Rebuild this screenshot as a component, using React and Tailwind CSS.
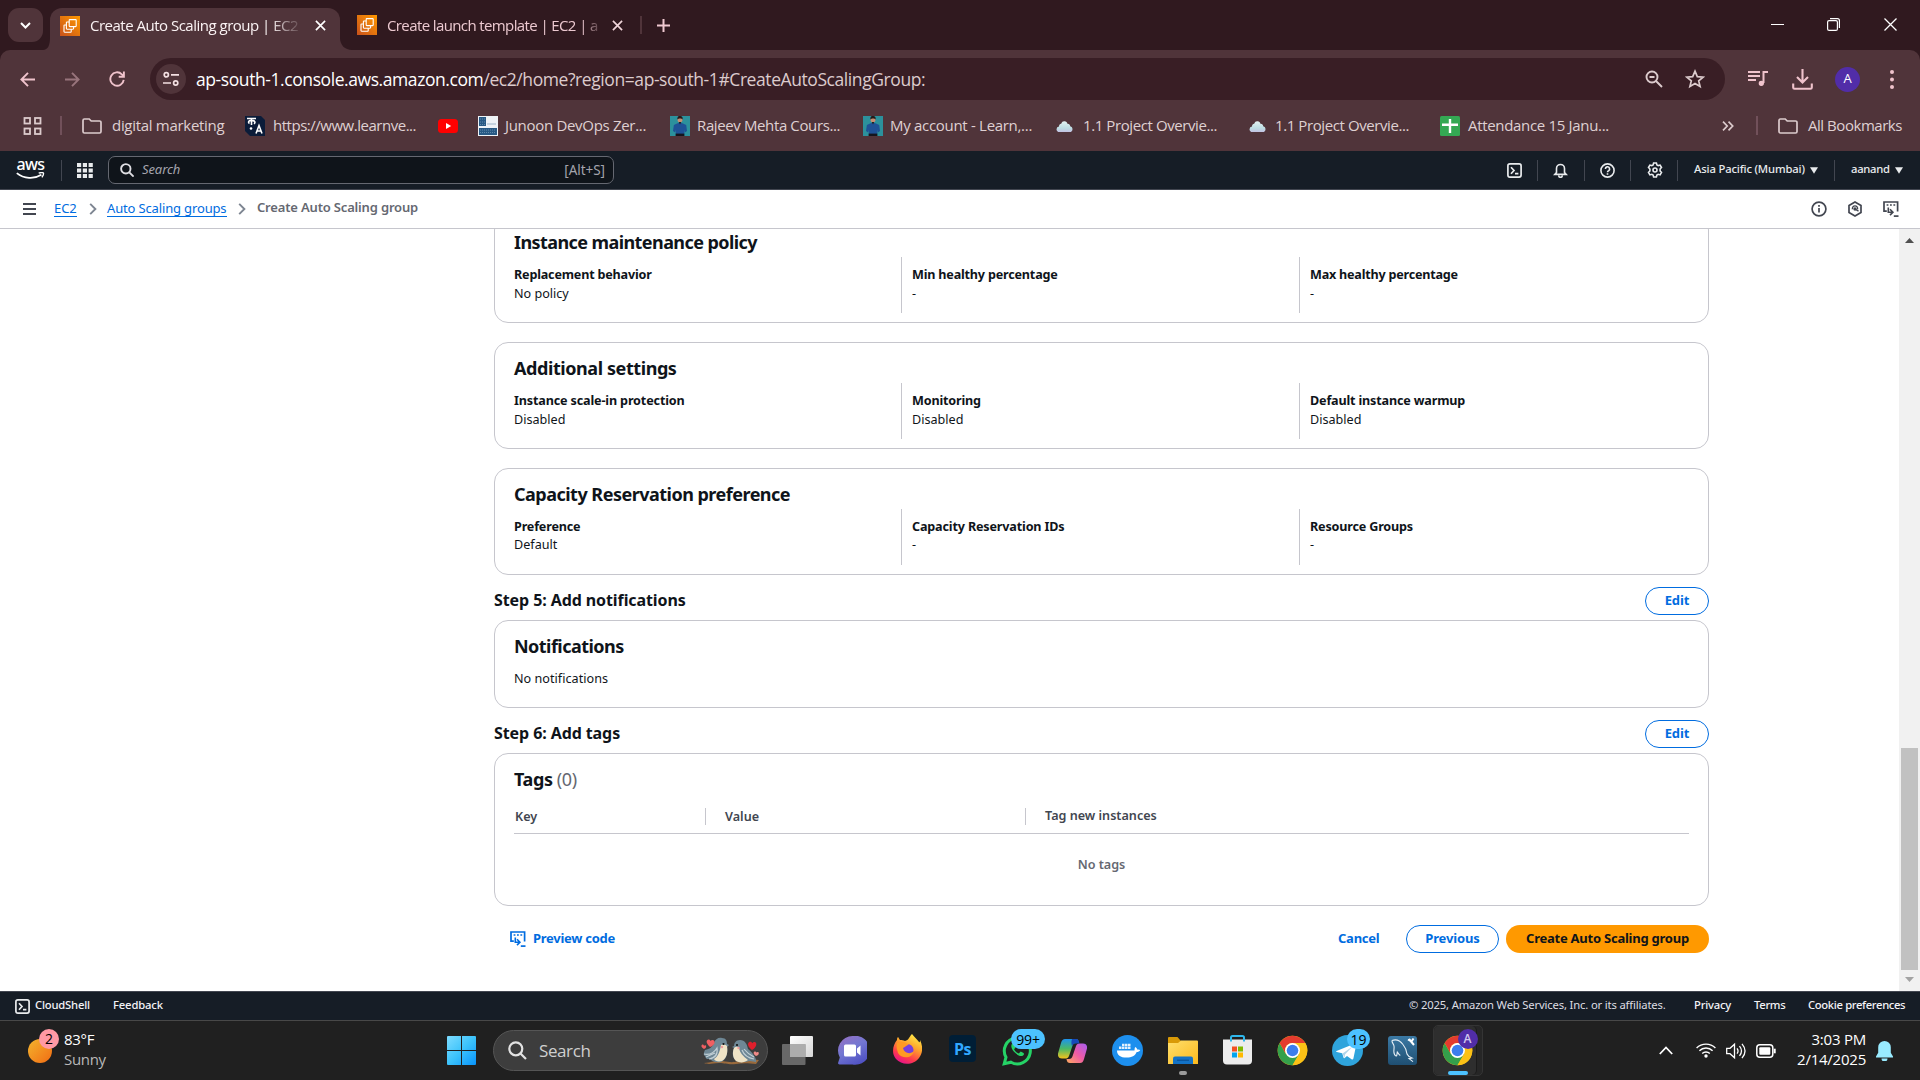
import React from 'react';

const OPEN = "font-['Open_Sans','Noto_Sans',sans-serif]";

/* ---------- small icons ---------- */
function Ec2Icon() {
  return (
    <svg className="h-5 w-5 shrink-0" viewBox="0 0 20 20" fill="none">
      <defs>
        <linearGradient id="ec2" x1="0" y1="1" x2="1" y2="0">
          <stop offset="0" stopColor="#c8511b" />
          <stop offset="1" stopColor="#f90" />
        </linearGradient>
      </defs>
      <rect width="20" height="20" fill="url(#ec2)" />
      <rect x="9.2" y="3.6" width="7" height="7" rx=".6" stroke="#fff" strokeWidth="1.1" />
      <path d="M9.200 6H7a.6.6 0 0 0-.6.6v6a.6.6 0 0 0 .6.6h6a.6.6 0 0 0 .6-.6v-2M6.400 9H4.600a.6.6 0 0 0-.6.6v6a.6.6 0 0 0 .6.6h6a.6.6 0 0 0 .6-.6v-2.400" stroke="#fff" strokeWidth="1.100" />
    </svg>
  );
}

function CloseIcon({ className }) {
  return (
    <svg className={className} viewBox="0 0 12 12" fill="none" stroke="currentColor">
      <path d="M1 1l10 10M11 1L1 11" strokeWidth="1.8" />
    </svg>
  );
}

function FolderIcon() {
  return (
    <svg className="h-4 w-5 shrink-0" viewBox="0 0 20 16" fill="none" stroke="#dccbcd" strokeWidth="1.7">
      <path d="M1 2.4A1.4 1.4 0 0 1 2.4 1h4.8l2 2h8.4A1.4 1.4 0 0 1 19 4.4v9.2a1.4 1.4 0 0 1-1.4 1.4H2.4A1.4 1.4 0 0 1 1 13.6z" />
    </svg>
  );
}

function PersonIcon() {
  return (
    <svg className="h-5 w-5 shrink-0" viewBox="0 0 20 20">
      <rect width="20" height="20" fill="#2c919c" />
      <path d="M7 7.5l3-1 3 1 3.2 1.6.8 6-2.2 1.5-.5-3V18H5.8v-4.6l-.6 3-2.2-1.3.9-6z" fill="#1e5296" />
      <path d="M5.6 17.6h8.8V20H5.6z" fill="#14151d" />
      <circle cx="10" cy="3.8" r="2.5" fill="#c98f72" />
      <path d="M7.4 3.5C7.2.4 8.6 0 10 0s3 .6 2.6 3.5c-.6-1.5-4.400-1.500-5.200 0zM8.800 6h2.400L10 8.500z" fill="#241a1a" />
    </svg>
  );
}

function CloudIcon() {
  return (
    <svg className="h-[14px] w-[17px] shrink-0" viewBox="0 0 17 14">
      <defs>
        <linearGradient id="cloud" x1="0" y1="0" x2="0" y2="1">
          <stop offset="0" stopColor="#e4f3f2" />
          <stop offset="0.65" stopColor="#bddde3" />
          <stop offset="1" stopColor="#c3c1e2" />
        </linearGradient>
      </defs>
      <path d="M3.600 13A3 3 0 0 1 .5 10.200 3 3 0 0 1 3 7.500C3 5.500 4.200 4.700 5.200 4.800 5.800 2.600 7.200 2 8.500 2.200c1.800.1 2.600 1.200 2.900 2.600 1.800-.1 2.700 1 2.800 2.500 1.500.4 2.300 1.500 2.300 2.900A2.900 2.900 0 0 1 13.500 13z" fill="url(#cloud)" />
    </svg>
  );
}

function CloudShellIcon() {
  return (
    <svg className="h-[15px] w-[15px] shrink-0" viewBox="0 0 15 15" fill="none" stroke="#e9ebed" strokeWidth="1.700">
      <rect x="0.900" y="0.900" width="13.200" height="13.200" rx="2" />
      <path d="M4 4.200l3 3.300-3 3.300M8 10.700h3.400" />
    </svg>
  );
}

function CodeIcon({ className }) {
  return (
    <svg className={className} viewBox="0 0 16 16" fill="none" stroke="currentColor">
      <path d="M3.800 10.200H1V1h13.600v9.600" strokeWidth="1.700" />
      <path d="M3.600 4h1.800M7 4h1.800M10.400 4h1.800" strokeWidth="1.500" />
      <path d="M5.300 6.400v4.800h4M7 8.300l2.900 2.900L7 14.100" strokeWidth="1.600" />
      <path d="M10.800 15.100h4.700" strokeWidth="1.700" />
    </svg>
  );
}

function Crumb() {
  return (
    <svg className="h-3 w-2 shrink-0" viewBox="0 0 8 12" fill="none" stroke="#7d8591" strokeWidth="1.900">
      <path d="M1.200 .8L6.400 6l-5.200 5.200" />
    </svg>
  );
}

/* ---------- browser chrome ---------- */
function TabStrip() {
  return (
    <div className="flex h-[50px] items-start bg-[#30191f]">
      <div className="ml-2 mt-2 flex h-[34px] w-[35px] shrink-0 items-center justify-center rounded-[11px] bg-[#50343a]">
        <svg className="h-[7px] w-[11px]" viewBox="0 0 11 7" fill="none" stroke="#fff" strokeWidth="2"><path d="M1 1l4.500 4.500L10 1" /></svg>
      </div>
      <svg className="mt-[38px] h-3 w-[7px] shrink-0" viewBox="0 0 7 12"><path d="M7 0v12H0C5 12 7 7 7 0z" fill="#50343a" /></svg>
      <div className="mt-2 flex h-[42px] w-[290px] shrink-0 items-center rounded-t-[12px] bg-[#50343a] pb-[7px] pl-[10px]">
        <Ec2Icon />
        <div className="ml-[10px] w-[209px] whitespace-nowrap text-[15px] tracking-[-0.500px] text-[#fbf3f4] [mask-image:linear-gradient(to_right,#000_86%,transparent_102%)]">Create Auto Scaling group | EC2</div>
        <CloseIcon className="ml-4 h-[11px] w-[11px] text-white" />
      </div>
      <svg className="mt-[38px] h-3 w-3 shrink-0" viewBox="0 0 12 12"><path d="M0 0v12h12C5 12 0 7 0 0z" fill="#50343a" /></svg>
      <div className="mt-2 flex h-[34px] items-center pl-[5px] text-[#f0c9d1]">
        <Ec2Icon />
        <div className="ml-[10px] w-[211px] whitespace-nowrap text-[15px] tracking-[-0.610px] text-[#ecc9d0] [mask-image:linear-gradient(to_right,#000_92%,transparent_103%)]">Create launch template | EC2 | a</div>
        <CloseIcon className="ml-[14px] h-[11px] w-[11px] text-[#f0d5da]" />
        <div className="ml-[17px] h-[18px] w-[2px] bg-[#50343a]" />
        <svg className="ml-[15px] h-[13px] w-[13px]" viewBox="0 0 13 13" stroke="#f0c9d1" strokeWidth="2"><path d="M6.500 0v13M0 6.500h13" /></svg>
      </div>
      <div className="ml-auto mr-[23px] flex h-[48px] items-center text-white">
        <div className="mr-[43px] h-px w-[13px] bg-white" />
        <svg className="mr-11 h-[13px] w-[13px]" viewBox="0 0 13 13" fill="none" stroke="#fff" strokeWidth="1.200"><rect x="0.600" y="2.600" width="9.800" height="9.800" rx="1.500" /><path d="M3 .6h7.500a1.900 1.900 0 0 1 1.900 1.900V10" /></svg>
        <svg className="h-[13px] w-[13px]" viewBox="0 0 13 13" stroke="#fff" strokeWidth="1.300"><path d="M.5 .5l12 12M12.500 .5l-12 12" /></svg>
      </div>
    </div>
  );
}

function Toolbar() {
  return (
    <div className="bg-[#30191f]">
      <div className="flex h-[50px] items-end rounded-t-[10px] bg-[#50343a]">
        <div className="flex h-[42px] w-[150px] shrink-0 items-center pl-5 text-[#f0c3cc]">
          <svg className="h-[15px] w-[15px]" viewBox="0 0 15 15" fill="none" stroke="currentColor" strokeWidth="1.900"><path d="M15 7.500H1.500M8 .8L1.400 7.500 8 14.200" /></svg>
          <svg className="ml-[30px] h-[15px] w-[15px] opacity-45" viewBox="0 0 15 15" fill="none" stroke="currentColor" strokeWidth="1.900"><path d="M0 7.500h13.500M7 .8l6.600 6.700L7 14.200" /></svg>
          <svg className="ml-[29px] h-4 w-4" viewBox="0 0 16 16" fill="none" stroke="currentColor" strokeWidth="1.900"><path d="M14.700 8.800A6.700 6.700 0 1 1 12.800 3.300L14.700 5.200M14.900 .5v5.200H9.700" /></svg>
        </div>
        <div className="flex h-[42px] w-[1575px] shrink-0 items-center rounded-full bg-[#391e25] pl-1.5">
          <div className="flex h-[30px] w-[30px] items-center justify-center rounded-full bg-[#50343a]">
            <svg className="h-4 w-4" viewBox="0 0 16 16" fill="none" stroke="#f3dfe2" strokeWidth="1.700"><circle cx="3.300" cy="3.800" r="2.100" /><path d="M8 3.800h8M0 12h8" /><circle cx="12.700" cy="12" r="2.100" /></svg>
          </div>
          <div className="ml-[10px] whitespace-nowrap text-[17.500px] tracking-[-0.420px] text-[#dccbcd]"><span className="text-white">ap-south-1.console.aws.amazon.com</span>/ec2/home?region=ap-south-1#CreateAutoScalingGroup:</div>
          <svg className="ml-auto h-[18px] w-[18px]" viewBox="0 0 18 18" fill="none" stroke="#dccbcd" strokeWidth="1.900"><circle cx="7" cy="7" r="5.500" /><path d="M11 11l6 6M4.500 7h5" /></svg>
          <svg className="ml-[22px] mr-5 h-5 w-5" viewBox="0 0 20 20" fill="none" stroke="#dccbcd" strokeWidth="1.700"><path d="M10 2.200l2.300 5.400 5.900.5-4.500 3.800 1.400 5.700-5.100-3-5.100 3 1.400-5.700L1.800 8.100l5.900-.5z" /></svg>
        </div>
        <div className="flex h-[42px] flex-1 items-center pl-[23px] text-[#f0c3cc]">
          <svg className="h-[18px] w-5" viewBox="0 0 20 18" fill="none" stroke="currentColor" strokeWidth="2"><path d="M0 2h12M0 6h12M0 10h8M20 2h-4.500v11" /><circle cx="13.300" cy="13.300" r="2.200" fill="currentColor" stroke="none" /><circle cx="13.300" cy="13.300" r="1.600" /></svg>
          <svg className="ml-6 h-[21px] w-[21px]" viewBox="0 0 21 21" fill="none" stroke="currentColor" strokeWidth="2.100"><path d="M10.500 0v13M5 8l5.500 5.500L16 8M1.200 14.500v4a1.300 1.300 0 0 0 1.300 1.300h16a1.300 1.300 0 0 0 1.300-1.300v-4" /></svg>
          <div className="ml-[22px] flex h-[25px] w-[25px] items-center justify-center rounded-full bg-[#512da8] text-[13px] text-white">A</div>
          <svg className="ml-[30px] h-[19px] w-1" viewBox="0 0 4 19" fill="currentColor"><circle cx="2" cy="2" r="2" /><circle cx="2" cy="9.500" r="2" /><circle cx="2" cy="17" r="2" /></svg>
        </div>
      </div>
    </div>
  );
}

function Bookmark({ icon, children, className, text }) {
  return (
    <div className={'flex shrink-0 items-center ' + className}>
      {icon}
      <span className={'whitespace-nowrap ' + text}>{children}</span>
    </div>
  );
}

function Bookmarks() {
  return (
    <div className="flex h-[51px] items-center bg-[#50343a] text-[15px] text-[#dfd0d2]">
      <svg className="ml-[23px] h-[18px] w-[19px] shrink-0" viewBox="0 0 18 18" fill="none" stroke="#dccbcd" strokeWidth="1.800"><rect x="1" y="1" width="5.500" height="5.500" /><rect x="11.500" y="1" width="5.500" height="5.500" /><rect x="1" y="11.500" width="5.500" height="5.500" /><rect x="11.500" y="11.500" width="5.500" height="5.500" /></svg>
      <div className="ml-[18px] mr-5 h-[19px] w-[2px] shrink-0 bg-[#71505a]" />
      <Bookmark className="w-[163px]" text="ml-[10px] tracking-[-0.300px]" icon={<FolderIcon />}>digital marketing</Bookmark>
      <Bookmark className="w-[193px]" text="ml-2 tracking-[-0.480px]" icon={
        <svg className="h-5 w-5 shrink-0" viewBox="0 0 20 20" fill="none" stroke="#fff" strokeWidth="1.600"><path d="M0 0h16l4 4v16H5l-5-5z" fill="#0b1c39" stroke="none" /><path d="M2 2.500h9M6.500 2.500V9M6.500 5C4 3.800 2.500 6.500 4.500 7.500M6.500 5c3-1.300 4.500 1.500 2.500 2.800" /><circle cx="6" cy="12.500" r="1.300" fill="#fff" stroke="none" /><path d="M11 17.500l3-8 3 8M12 15h4" /></svg>
      }>https://www.learnve...</Bookmark>
      <svg className="mr-[20px] h-[14px] w-5 shrink-0" viewBox="0 0 20 14"><rect width="20" height="14" rx="3.500" fill="#f00" /><path d="M8 4l5.200 3L8 10z" fill="#fff" /></svg>
      <Bookmark className="w-[192px]" text="ml-[7px] tracking-[-0.310px]" icon={
        <svg className="h-5 w-5 shrink-0" viewBox="0 0 20 20"><rect width="20" height="20" fill="#eef3f7" /><path d="M1 1h7v9H1zM1 12h18v7H1z" fill="#285a85" /><path d="M2 3h5M2 6h5M2 8.500h5M2 14h16M2 16.500h16" stroke="#6f96b5" strokeWidth=".8" strokeDasharray="1 1" /><path d="M9 8h9" stroke="#9db4c8" /></svg>
      }>Junoon DevOps Zer...</Bookmark>
      <Bookmark className="w-[193px]" text="ml-[7px] tracking-[-0.380px]" icon={<PersonIcon />}>Rajeev Mehta Cours...</Bookmark>
      <Bookmark className="w-[193px]" text="ml-[7px] tracking-[-0.300px]" icon={<PersonIcon />}>My account - Learn,...</Bookmark>
      <Bookmark className="w-[193px]" text="ml-[10px] tracking-[-0.410px]" icon={<CloudIcon />}>1.1 Project Overvie...</Bookmark>
      <Bookmark className="w-[191px]" text="ml-[9px] tracking-[-0.410px]" icon={<CloudIcon />}>1.1 Project Overvie...</Bookmark>
      <Bookmark className="w-[282px]" text="ml-2 tracking-[-0.320px]" icon={
        <svg className="h-5 w-5 shrink-0" viewBox="0 0 20 20"><rect width="20" height="20" rx="1.500" fill="#34a853" /><path d="M8.800 3h2.400v4.600H18v2.400h-6.800V17H8.800v-7H2V7.600h6.800z" fill="#fff" /></svg>
      }>Attendance 15 Janu...</Bookmark>
      <svg className="h-[10px] w-3 shrink-0" viewBox="0 0 12 10" fill="none" stroke="#dccbcd" strokeWidth="1.700"><path d="M1 .7L5.200 5 1 9.300M6.500 .7L10.700 5 6.500 9.300" /></svg>
      <div className="ml-[22px] mr-5 h-[19px] w-[2px] shrink-0 bg-[#71505a]" />
      <Bookmark className="" text="ml-[10px] tracking-[-0.460px]" icon={<FolderIcon />}>All Bookmarks</Bookmark>
    </div>
  );
}

/* ---------- AWS console ---------- */
function Bar({ className }) {
  return <div className={'h-[21px] w-px shrink-0 bg-[#424650] ' + className} />;
}

function Caret({ className }) {
  return <svg className={'h-[7px] w-2 shrink-0 ' + className} viewBox="0 0 8 7" fill="#e9ebed"><path d="M0 .3h8L4 6.800z" /></svg>;
}

function AwsNav() {
  return (
    <div className="flex h-[39px] items-center border-b border-[#424650] bg-[#161d26] text-[#e9ebed]">
      <div className="-mt-[3px] ml-4 flex w-[29px] shrink-0 flex-col items-center">
        <span className="h-[13px] text-[16px] font-medium leading-[10px] tracking-[-0.600px] text-white">aws</span>
        <svg className="h-[7px] w-[29px]" viewBox="0 0 30 7" fill="none" stroke="#fff" strokeWidth="1.800"><path d="M.8 1c7.500 6 18 6.500 25.500 1.800" /><path d="M23.500 .9c2-.5 4.300-.6 4.800 0s-.2 2.600-1.500 4.600" strokeWidth="1.400" /></svg>
      </div>
      <Bar className="ml-4" />
      <svg className="ml-[15px] h-[15px] w-[16px] shrink-0" viewBox="0 0 16 15" fill="#e9ebed">
        {[0, 5.800, 11.600].map((x) => [0, 5.500, 11].map((y) => <rect key={x + '-' + y} x={x} y={y} width="4.200" height="4" />))}
      </svg>
      <div className="ml-[15px] flex h-[28px] w-[506px] shrink-0 items-center rounded-[7px] border border-[#656871] bg-[#0f141a] pl-[11px] pr-2 text-[14px]">
        <svg className="h-[14px] w-[14px]" viewBox="0 0 14 14" fill="none" stroke="#dedee3" strokeWidth="1.900"><circle cx="5.800" cy="5.800" r="4.700" /><path d="M9.300 9.300l4.300 4.300" /></svg>
        <span className="ml-2 text-[13px] italic tracking-[-0.100px] text-[#a4a4ad]">Search</span>
        <span className="ml-auto text-[13.500px] tracking-[-0.050px] text-[#a4a4ad]">[Alt+S]</span>
      </div>
      <div className="ml-auto flex items-center">
        <CloudShellIcon />
        <Bar className="ml-[15px]" />
        <svg className="ml-[15px] h-[15px] w-[15px]" viewBox="0 0 15 15" fill="none" stroke="#e9ebed" strokeWidth="1.600"><path d="M3.500 9.500V5.500a4 4 0 0 1 8 0v4l1.700 1.900H1.800zM5.700 12.500a1.800 1.800 0 0 0 3.600 0" /></svg>
        <Bar className="ml-[16px]" />
        <svg className="ml-[15px] h-[15px] w-[15px]" viewBox="0 0 15 15" fill="none" stroke="#e9ebed" strokeWidth="1.600"><circle cx="7.500" cy="7.500" r="6.600" /><path d="M5.400 6a2.100 2.100 0 1 1 3.200 1.700c-.8.4-1.100.8-1.100 1.500M7.500 10.300v1.500" /></svg>
        <Bar className="ml-[15px]" />
        <svg className="ml-4 h-[16px] w-[16px]" viewBox="0 0 16 16" fill="none" stroke="#e9ebed" strokeWidth="1.600"><circle cx="8" cy="8" r="2" /><path d="M6.600 1h2.800l.5 1.900 1.300.7 1.900-.5 1.400 2.400L13.100 7v2l1.400 1.400-1.400 2.500-1.900-.6-1.300.8-.5 1.900H6.600l-.5-1.900-1.300-.8-1.900.6L1.500 10.400 2.900 9V7L1.500 5.500l1.400-2.400 1.900.5 1.300-.7z" /></svg>
        <Bar className="ml-[14px]" />
        <span className="mb-px ml-4 w-[116px] whitespace-nowrap text-[11.250px] font-medium tracking-[-0.160px]">Asia Pacific (Mumbai)</span>
        <Caret className="" />
        <Bar className="ml-[16px]" />
        <span className="mb-px ml-4 w-[44px] whitespace-nowrap text-[11.250px] font-medium tracking-[-0.300px]">aanand</span>
        <Caret className="mr-[17px]" />
      </div>
    </div>
  );
}

function Breadcrumbs() {
  return (
    <div className="flex h-[39px] items-center border-b border-[#c6c6cd] bg-white text-[13px] text-[#424650]">
      <svg className="ml-[23px] h-3 w-[13px] shrink-0" viewBox="0 0 13 12" stroke="#424650" strokeWidth="1.900"><path d="M0 1h13M0 6h13M0 11h13" /></svg>
      <span className="ml-[18px] w-[23px] whitespace-nowrap border-b border-[#006ce0] leading-[15px] tracking-[-0.100px] text-[#006ce0]">EC2</span>
      <div className="ml-[12px] w-[18px]"><Crumb /></div>
      <span className="w-[120px] whitespace-nowrap border-b border-[#006ce0] leading-[15px] tracking-[-0.150px] text-[#006ce0]">Auto Scaling groups</span>
      <div className="ml-[11px] w-[19px]"><Crumb /></div>
      <span className="whitespace-nowrap pb-[2px] font-semibold tracking-[-0.170px] text-[#656871]">Create Auto Scaling group</span>
      <div className="ml-auto mr-[21px] flex items-center text-[#424650]">
        <svg className="h-4 w-4" viewBox="0 0 16 16" fill="none" stroke="currentColor" strokeWidth="1.700"><circle cx="8" cy="8" r="6.900" /><path d="M8 7v4.500M8 4v1.700" /></svg>
        <svg className="ml-5 h-4 w-4" viewBox="0 0 16 16" fill="none" stroke="currentColor" strokeWidth="1.700"><path d="M8 1l6 3.500v7L8 15l-6-3.500v-7z" /><circle cx="8" cy="8" r="1.700" fill="currentColor" stroke="none" /><path d="M8 8l3.500 2.200M5.500 8.200a2.600 2.600 0 1 1 5 0" strokeWidth="1.400" /></svg>
        <CodeIcon className="ml-[20px] h-4 w-4" />
      </div>
    </div>
  );
}

const cardBase = 'shrink-0 border border-[#c6c6cd] bg-white';

function Card({ title, titleTrack, fields, className, valueLeading = 'leading-[19px]' }) {
  return (
    <section className={cardBase + ' h-[107px] rounded-[14px] px-[19px] ' + className}>
      <h2 className={'mt-3 whitespace-nowrap text-[18px] font-bold leading-[26px] ' + titleTrack}>{title}</h2>
      <div className="mt-[2px] flex h-[56px] text-[12.600px]">
        {fields.map(([label, value, track], i) => (
          <div key={label} className={(i === 0 ? 'w-[387px]' : 'w-[398px] border-l border-[#c6c6cd] pl-[10px]') + ' shrink-0 whitespace-nowrap pt-[8px]'}>
            <div className={'font-bold leading-[19px] ' + track}>{label}</div>
            <div className={valueLeading}>{value}</div>
          </div>
        ))}
      </div>
    </section>
  );
}

function StepHeader({ children, className }) {
  return (
    <div className={'flex shrink-0 items-center justify-between ' + className}>
      <h3 className="whitespace-nowrap pb-[2px] text-[16px] font-bold tracking-[-0.090px]">{children}</h3>
      <button className="h-[28px] w-[64px] rounded-full border-[1.500px] border-[#006ce0] text-[13px] font-bold tracking-[-0.100px] text-[#006ce0]">Edit</button>
    </div>
  );
}

function Content() {
  return (
    <main className="flex h-[762px] overflow-hidden bg-white text-[#0f141a]">
      <div className="ml-[494px] flex w-[1215px] shrink-0 flex-col">
        <Card className="-mt-[13px]" title="Instance maintenance policy" titleTrack="tracking-[-0.580px]" fields={[['Replacement behavior', 'No policy', 'tracking-[-0.190px]'], ['Min healthy percentage', '-', 'tracking-[-0.190px]'], ['Max healthy percentage', '-', 'tracking-[-0.220px]']]} />
        <Card className="mt-[19px]" title="Additional settings" titleTrack="tracking-[-0.420px]" fields={[['Instance scale-in protection', 'Disabled', 'tracking-[-0.150px]'], ['Monitoring', 'Disabled', 'tracking-[-0.170px]'], ['Default instance warmup', 'Disabled', 'tracking-[-0.170px]']]} />
        <Card className="mt-[19px]" valueLeading="leading-[17px]" title="Capacity Reservation preference" titleTrack="tracking-[-0.510px]" fields={[['Preference', 'Default', 'tracking-[-0.180px]'], ['Capacity Reservation IDs', '-', 'tracking-[-0.160px]'], ['Resource Groups', '-', 'tracking-[-0.180px]']]} />
        <StepHeader className="mt-3 h-[28px]">Step 5: Add notifications</StepHeader>
        <section className={cardBase + ' mt-[5px] h-[88px] rounded-[14px] px-[19px]'}>
          <h2 className="mt-3 text-[18px] font-bold leading-[26px] tracking-[-0.540px]">Notifications</h2>
          <p className="mt-[10px] text-[12.600px] leading-[19px] tracking-[0.030px]">No notifications</p>
        </section>
        <StepHeader className="mt-3 h-[28px]">Step 6: Add tags</StepHeader>
        <section className={cardBase + ' mt-[5px] h-[153px] rounded-[14px] px-[19px]'}>
          <h2 className="mt-3 text-[18px] font-bold leading-[26px] tracking-[-0.400px]">Tags <span className="font-normal text-[#656871]">(0)</span></h2>
          <div className="mt-[7px] flex h-[35px] items-center border-b border-[#c6c6cd] text-[12.600px] font-semibold text-[#424650]">
            <div className="w-[192px] border-r border-[#c6c6cd] pl-[1px] leading-[17px]">Key</div>
            <div className="w-[320px] border-r border-[#c6c6cd] pl-[19px] leading-[17px]">Value</div>
            <div className="whitespace-nowrap pl-[19px]">Tag new instances</div>
          </div>
          <p className="mt-[22px] text-center text-[12.600px] font-semibold text-[#656871]">No tags</p>
        </section>
        <div className="mt-[19px] flex h-[28px] items-center text-[13px] font-bold text-[#006ce0]">
          <CodeIcon className="ml-4 h-4 w-4" />
          <span className="ml-[7px] whitespace-nowrap tracking-[-0.270px]">Preview code</span>
          <span className="ml-auto w-[68px] tracking-[-0.250px]">Cancel</span>
          <button className="h-[28px] w-[93px] rounded-full border-[1.500px] border-[#006ce0] font-bold tracking-[-0.130px]">Previous</button>
          <button className="ml-[7px] h-[28px] w-[203px] whitespace-nowrap rounded-full bg-[#ff9900] font-bold tracking-[-0.240px] text-[#0f141a]">Create Auto Scaling group</button>
        </div>
      </div>
      <div className="ml-auto flex w-[21px] shrink-0 flex-col items-center bg-[#f1f1f1]">
        <svg className="mt-[9px] h-[5px] w-[9px]" viewBox="0 0 9 5" fill="#505050"><path d="M0 5h9L4.500 0z" /></svg>
        <div className="mt-[505px] h-[222px] w-[17px] bg-[#c1c1c1]" />
        <svg className="mt-[7px] h-[5px] w-[9px]" viewBox="0 0 9 5" fill="#a3a3a3"><path d="M0 0h9L4.500 5z" /></svg>
      </div>
    </main>
  );
}

function Footer() {
  return (
    <footer className="flex h-[29px] items-center whitespace-nowrap border-t border-[#424650] bg-[#161d26] text-[11.250px] font-medium text-[#f3f3f7]">
      <div className="ml-[15px]"><CloudShellIcon /></div>
      <span className="mb-[2px] ml-[5px] w-[78px] tracking-[-0.200px]">CloudShell</span>
      <span className="mb-[2px] tracking-[-0.150px]">Feedback</span>
      <span className="mb-[2px] ml-auto w-[285px] font-normal tracking-[-0.160px] text-[#dedee3]">© 2025, Amazon Web Services, Inc. or its affiliates.</span>
      <span className="mb-[2px] w-[60px] tracking-[-0.200px]">Privacy</span>
      <span className="mb-[2px] w-[54px] tracking-[-0.300px]">Terms</span>
      <span className="mb-[2px] w-[112px] tracking-[-0.350px]">Cookie preferences</span>
    </footer>
  );
}

/* ---------- taskbar ---------- */
function Birds() {
  return (
    <svg className="h-[28px] w-[59px]" viewBox="0 0 59 28">
      <path d="M3 26c8 0 10-3 18-2s10 2 16 0 12-2 21-1l-3 4c-8-1-14-1-20 0-8 1-10-1-17-1S9 28 3 26z" fill="#9a6a3c" />
      <path d="M4 19C2 18 3 15 4 13c5-1 7-3 9-7 1-4 5-6 8-5 4 0 5 3 5 6l2 1-2 2c1 7-1 13-6 15-6 1-9-1-11-3-2 0-4 1-5-3z" fill="#6e8795" />
      <path d="M20 8c3-1 5 0 6 1 1 6 0 12-5 15-4 1-7 0-8-2 5-3 6-9 7-14z" fill="#efe3c6" />
      <path d="M3 17c5 1 10-1 13-6 1 6-2 10-8 11M5 20l9-4" fill="none" stroke="#c2d0d6" strokeWidth="1.200" />
      <path d="M55 25c1-3-3-9-8-13-1-5-3-9-8-9-4 0-6 3-6 6l-2 1 2 1c-3 7 0 12 4 14 6 1 9-1 12-1z" fill="#6e8795" />
      <path d="M33 11c2-2 4-1 5 0 1 5 4 8 9 12-4 3-8 3-12 1-3-3-4-8-2-13z" fill="#efe3c6" />
      <path d="M41 13c2 5 6 8 12 9M43 12c3 4 6 6 10 8" fill="none" stroke="#c2d0d6" strokeWidth="1.200" />
      <circle cx="22.500" cy="7" r="1.100" fill="#111" /><circle cx="36" cy="8" r="1.100" fill="#111" />
      <circle cx="21" cy="10" r="1.200" fill="#f29c9c" /><circle cx="37.500" cy="11" r="1.200" fill="#f29c9c" />
      <path d="M9 10C6 7 5 5 6 3.500s3-1 3.500.5c1-1.500 3.500-1.500 4 .5S12 9 9 10zM3 12C.8 10.500-.2 9 .8 8s2 0 2.200.7C3.800 7.800 5.300 8 5.200 9.300S4.500 11.500 3 12z" fill="#ef5f62" />
      <path d="M51 13c-3.500-3-4.600-5-3.600-7s3.300-1.500 3.900.2C52.500 4.500 55 4.800 55.300 6.800S54 11.500 51 13z" fill="#df1f2c" />
      <path d="M55 19c-2.200-1.500-3-3-2-4s2.100-.4 2.400.5c.8-.9 2.500-.6 2.400.8S56.800 18.500 55 19z" fill="#ef8a88" />
    </svg>
  );
}

function Chrome() {
  return (
    <svg className="h-[31px] w-[31px]" viewBox="0 0 48 48">
      <circle cx="24" cy="24" r="23" fill="#fbc116" />
      <path d="M4.100 12.500A23 23 0 0 0 24 47L34 29.800 24 24 14 29.800z" fill="#34a04b" />
      <path d="M24 12.500h19.900A23 23 0 0 1 24 47l10-17.200z" fill="#fbc116" />
      <path d="M4.100 12.500A23 23 0 0 1 43.900 12.500H24a11.500 11.500 0 0 0-10 17.300z" fill="#e33b2e" />
      <circle cx="24" cy="24" r="11.500" fill="#fff" />
      <circle cx="24" cy="24" r="9" fill="#3b7ded" />
    </svg>
  );
}

function Slot({ children, className = 'w-[55px]' }) {
  return <div className={'relative flex h-full shrink-0 items-center justify-center ' + className}>{children}</div>;
}

function Taskbar() {
  return (
    <div className="flex h-[60px] items-stretch border-t border-[#484848] bg-[#202020] text-[15px] text-white">
      <div className="flex w-[434px] shrink-0 items-center">
        <div className="relative ml-[28px] h-[24px] w-[24px] rounded-full bg-linear-to-br from-[#f2b42d] to-[#f06a13]">
          <div className="absolute -top-[10px] left-[11px] flex h-5 w-5 items-center justify-center rounded-full bg-[#ff99a4] text-[14px] text-black">2</div>
        </div>
        <div className="-mt-[3px] ml-3 leading-[20px] tracking-[-0.300px]">
          <div>83°F</div>
          <div className="text-[#b9b9b9]">Sunny</div>
        </div>
      </div>
      <Slot>
        <svg className="h-[29px] w-[29px]" viewBox="0 0 29 29">
          <defs><linearGradient id="win" x1="0" y1="0" x2="29" y2="29" gradientUnits="userSpaceOnUse"><stop offset="0" stopColor="#7edcff" /><stop offset=".5" stopColor="#3cc3fb" /><stop offset="1" stopColor="#0893fb" /></linearGradient></defs>
          <path d="M1 0h13v14H0V1a1 1 0 0 1 1-1zM15 0h13a1 1 0 0 1 1 1v13H15zM0 15h14v14H1a1 1 0 0 1-1-1zM15 15h14v13a1 1 0 0 1-1 1H15z" fill="url(#win)" />
        </svg>
      </Slot>
      <div className="ml-1 mt-[9px] flex h-[41px] w-[275px] shrink-0 items-center rounded-full border border-[#555] bg-[#3d3d3d] pl-[14px]">
        <svg className="h-[19px] w-[19px]" viewBox="0 0 19 19" fill="none" stroke="#e2e2e2" strokeWidth="2.200"><circle cx="7.800" cy="7.800" r="6.500" /><path d="M12.500 12.500l5.500 5.500" /></svg>
        <span className="ml-[12px] text-[17px] tracking-[-0.400px] text-[#cfcfcf]">Search</span>
        <div className="ml-auto mr-[7px]"><Birds /></div>
      </div>
      <div className="ml-[2px] flex">
        <Slot>
          <svg className="h-[29px] w-[31px]" viewBox="0 0 31 29"><defs><linearGradient id="tv" x1="0" y1="0" x2="1" y2="1"><stop offset="0" stopColor="#fff" /><stop offset="1" stopColor="#d6d6d6" /></linearGradient></defs><rect x="8" y="0" width="23" height="21" rx="1" fill="url(#tv)" /><rect x="0" y="8" width="23.500" height="21" rx="1" fill="#767676" opacity=".85" /><path d="M8 8h15.500v13H8z" fill="#adadad" /></svg>
        </Slot>
        <Slot>
          <svg className="h-[29px] w-[29px]" viewBox="0 0 29 29"><defs><linearGradient id="meet" x1="0" y1="0" x2=".6" y2="1"><stop offset="0" stopColor="#9a6fc0" /><stop offset=".5" stopColor="#7377d2" /><stop offset="1" stopColor="#5153c4" /></linearGradient></defs><path d="M14.500 0a14.500 14.500 0 1 1 0 28.500H1.500A1.500 1.500 0 0 1 .2 26.500L1.800 21.500A14.500 14.500 0 0 1 14.500 0z" fill="url(#meet)" /><rect x="6" y="8.500" width="12" height="12" rx="1.500" fill="#fff" /><path d="M19 12.500l3.500-3v10l-3.500-3z" fill="#fff" /></svg>
        </Slot>
        <Slot>
          <svg className="mb-1 h-[30px] w-[29px]" viewBox="0 0 29 30"><defs><linearGradient id="ff" x1=".8" y1="0" x2=".3" y2="1"><stop offset="0" stopColor="#fff04a" /><stop offset=".4" stopColor="#ffa32b" /><stop offset=".75" stopColor="#ff3a4c" /><stop offset="1" stopColor="#e5128c" /></linearGradient></defs><path d="M19 0c2 3 5 5 7 8 1 1 1-1 1-2 3 6 3 13-1 18-5 7-17 8-23 1-5-6-3-14 1-19 0-1 0-2 1-3 1 1 1 2 2 3 2 0 3 0 5 1 4-1 4-4 7-7z" fill="url(#ff)" /><circle cx="14.500" cy="16" r="6" fill="#7641dc" /><path d="M4 9c4-2 9-1 12 2-3 0-3 2-6 3 1 5 7 7 11 3-1 7-12 9-16 2-1-3-2-7-1-10z" fill="#ff9a23" /></svg>
        </Slot>
        <Slot>
          <div className="mb-1 flex h-[27px] w-[27px] items-center justify-center rounded-[4px] bg-[#001e36] text-[16px] font-bold tracking-[-0.500px] text-[#31a8ff]">Ps</div>
        </Slot>
        <Slot>
          <svg className="h-[31px] w-[31px]" viewBox="0 0 31 31" fill="none" stroke="#25d366" strokeWidth="3"><path d="M2.200 28.800l1.800-6.600A13 13 0 1 1 9 27.200z" /><path d="M10.500 8.500c-2 1.500-1.500 5 1.500 8.300 3.200 3.400 6.900 5.300 9 3.700 1.500-1 1-2.300.5-2.600l-2.800-1.300-1.900 1.900c-2.200-.9-3.800-2.500-4.700-4.300l1.600-1.900-1.200-3.300c-.5-.8-1.400-.9-2-.5z" fill="#25d366" stroke="none" /></svg>
          <div className="absolute left-[21px] top-2 flex h-[20px] w-[34px] items-center justify-center rounded-full bg-[#4cc2ff] text-[14px] tracking-[-0.200px] text-black">99+</div>
        </Slot>
        <Slot>
          <svg className="h-[26px] w-[29px]" viewBox="0 0 29 26"><defs><linearGradient id="c1" x1="0" y1="0" x2="0" y2="1"><stop offset="0" stopColor="#1d93ee" /><stop offset=".5" stopColor="#4ab965" /><stop offset="1" stopColor="#f4c21c" /></linearGradient><linearGradient id="c2" x1="1" y1="0" x2="0" y2="1"><stop offset="0" stopColor="#a65df2" /><stop offset=".5" stopColor="#ef5aa5" /><stop offset="1" stopColor="#ffab5e" /></linearGradient></defs><path d="M7 1h11c2 0 2.500 1 3 4h-3c-2 0-3 1-3.600 3l-3.400 10c-.8 2-2 2.500-4 2.500H4c-3 0-4.500-2-4-5L3 5c1-3 2-4 4-4z" fill="url(#c1)" /><path d="M22 25H12c-2 0-3-1-3.500-4H11c2 0 3-1 3.600-3L18 8c.8-2 2-2.500 4-2.500h3c3 0 4.500 2 4 5l-3 10.500c-1 3-2 4-4 4z" fill="url(#c2)" /><path d="M14 1h4.500c1.500 0 2.200 1.500 3 4.500H18c-2 0-3 .5-4 2.500-.8-2-.8-5 0-7z" fill="#1749b8" /></svg>
        </Slot>
        <Slot>
          <svg className="h-[31px] w-[31px]" viewBox="0 0 31 31"><circle cx="15.500" cy="15.500" r="15.500" fill="#1d8fee" /><path d="M5 15.500h17.500c.2-1.200-.1-2.300.7-3.500 1.200.6 1.800 1.500 2 2.500 1.200-.2 2.300 0 3 .5-.6 1.400-2 2-3.500 2-1.500 3.800-5 5.600-10 5.600-6.500 0-9.700-2.500-9.700-7.100z" fill="#fff" /><path d="M7 11.500h2.500V14H7zM10 11.500h2.500V14H10zM13 11.500h2.500V14H13zM16 11.500h2.500V14H16zM10 8.700h2.500v2.400H10zM13 8.700h2.500v2.400H13zM16 8.700h2.500v2.400H16z" fill="#e3f1fd" /></svg>
        </Slot>
        <Slot>
          <svg className="h-[27px] w-[30px]" viewBox="0 0 30 27"><defs><linearGradient id="fe" x1="0" y1="0" x2="1" y2="1"><stop offset="0" stopColor="#ffdf6c" /><stop offset="1" stopColor="#fbb91d" /></linearGradient></defs><path d="M0 1a1 1 0 0 1 1-1h8.500l3 3.500V10H0z" fill="#d99a07" /><path d="M0 6h10l3-2.500h16a1 1 0 0 1 1 1V27H0z" fill="url(#fe)" /><path d="M5 27v-5.500a2 2 0 0 1 2-2h16a2 2 0 0 1 2 2V27z" fill="#1372c6" /><path d="M9 23.200h12" stroke="#084a8e" /></svg>
          <div className="absolute bottom-[5px] left-[24px] h-1 w-2 rounded-full bg-[#9a9a9a]" />
        </Slot>
        <Slot>
          <svg className="mb-px h-[30px] w-[29px]" viewBox="0 0 29 30"><path d="M0 4.500h29v21a4 4 0 0 1-4 4H4a4 4 0 0 1-4-4z" fill="#ececec" /><path d="M8 6.500V2.500a1.500 1.500 0 0 1 1.500-1.500h10A1.500 1.500 0 0 1 21 2.500V6.500" fill="none" stroke="#2fb7ec" strokeWidth="2" /><path d="M9 11.500h5v5H9z" fill="#f25022" /><path d="M15 11.500h5v5h-5z" fill="#7fba00" /><path d="M9 17.500h5v5H9z" fill="#00a4ef" /><path d="M15 17.500h5v5h-5z" fill="#ffb900" /></svg>
        </Slot>
        <Slot><Chrome /></Slot>
        <Slot>
          <svg className="h-[31px] w-[31px]" viewBox="0 0 31 31"><circle cx="15.500" cy="15.500" r="15.500" fill="#2fa4dc" /><path d="M4.500 16l18.500-7.500c1-.4 1.500 0 1.300 1l-2.900 14c-.3 1.200-1 1.300-1.900.8l-4.500-3.300-2.300 2.100c-.7.500-1 .1-1.200-.5l-1.300-4.400-5.400-1.200c-.9-.3-.9-.8-.3-1z" fill="#fff" /><path d="M10.500 18.500l10-7-7.500 8-.5 3.500z" fill="#b3d6ea" /></svg>
          <div className="absolute left-[27px] top-2 flex h-[20px] w-[23px] items-center justify-center rounded-full bg-[#4cc2ff] text-[14px] text-black">19</div>
        </Slot>
        <Slot>
          <svg className="h-[29px] w-[29px]" viewBox="0 0 29 29" fill="none"><defs><linearGradient id="my" x1="0" y1="0" x2="0" y2="1"><stop offset="0" stopColor="#3b79a4" /><stop offset="1" stopColor="#1f4f72" /></linearGradient></defs><rect width="29" height="29" rx="3" fill="url(#my)" /><path d="M4 4.500c4-1.500 8 0 11 4 2.500 3 3.500 6 4 9.500.8 2 2.500 3 5 4l-3 .6 4 3M4 4.500c-.4 2 1.500 3 2 5.500s-.6 4 0 7c.6 2 1.600 3.600 2.600 2.800.6-1.400.4-2.600.7-3.800 1 1.500 1.500 2.500 3 3.500" stroke="#e8f0f6" strokeWidth="1.100" /><path d="M21 3l5 6M25.500 2.500l-2 3M20 3.500l2.500 1.500" stroke="#fff" strokeWidth="2" /></svg>
        </Slot>
        <Slot>
          <div className="relative flex h-[51px] w-[50px] items-center justify-center rounded-[5px] border border-[#343434] bg-[#262626] pr-[1px]">
            <div className="absolute left-0 top-0 h-[49px] w-[43px] rounded-[5px] border-r border-[#1b1b1b] bg-[#2e2e2e]" />
            <div className="relative"><Chrome />
              <div className="absolute -top-[6px] left-[16px] flex h-5 w-5 items-center justify-center rounded-full bg-[#512da8] text-[12px] font-semibold text-[#d2c7ee]">A</div>
            </div>
            <div className="absolute bottom-0 left-[14px] h-1 w-5 rounded-full bg-[#4cc2ff]" />
          </div>
        </Slot>
      </div>
      <div className="ml-auto flex items-center">
        <svg className="h-[9px] w-[14px]" viewBox="0 0 14 9" fill="none" stroke="#fff" strokeWidth="1.800"><path d="M.8 8L7 1.500 13.200 8" /></svg>
        <svg className="-mt-[2px] ml-[23px] h-[16px] w-5" viewBox="0 0 20 16" fill="none" stroke="#fff" strokeWidth="1.400"><path d="M.6 6a13.300 13.300 0 0 1 18.800 0M3.400 8.800a9.300 9.300 0 0 1 13.200 0M6.200 11.500a5.400 5.400 0 0 1 7.600 0" /><circle cx="10" cy="14" r="1.700" fill="#fff" stroke="none" /></svg>
        <svg className="ml-[10px] h-[18px] w-5" viewBox="0 0 20 18" fill="none" stroke="#fff" strokeWidth="1.300"><path d="M.7 6.300H4l4.500-4v13.400L4 11.700H.7z" /><path d="M11 6.300c1.300 1.700 1.300 3.700 0 5.400M13.500 4.200c2.500 3 2.500 6.600 0 9.600M16 1.800c3.800 4.500 3.800 9.900 0 14.400" /></svg>
        <svg className="ml-[10px] h-[14px] w-5" viewBox="0 0 20 14" fill="none" stroke="#fff" strokeWidth="1.500"><rect x=".8" y=".8" width="16" height="12.400" rx="3" /><rect x="3.300" y="3.300" width="11" height="7.400" rx="1" fill="#fff" stroke="none" /><path d="M18.700 4.700v4.600" strokeWidth="2" /></svg>
        <div className="-mt-[3px] ml-[20px] w-[70px] whitespace-nowrap text-right leading-[20px] tracking-[-0.230px]">
          <div>3:03 PM</div>
          <div>2/14/2025</div>
        </div>
        <svg className="ml-[10px] mr-[27px] h-5 w-[17px]" viewBox="0 0 17 20" fill="#99ebff"><path d="M8.500 0a6.300 6.300 0 0 1 6.300 6.300v5.500L17 15.500v1H0v-1l2.200-3.700V6.300A6.300 6.300 0 0 1 8.500 0zM5.500 17.500h6a3 3 0 0 1-6 0z" /></svg>
      </div>
    </div>
  );
}

export default function App() {
  return (
    <div className="flex h-[1080px] w-[1920px] flex-col overflow-hidden font-['Noto_Sans',sans-serif]">
      <div className={OPEN}>
        <TabStrip />
        <Toolbar />
        <Bookmarks />
      </div>
      <AwsNav />
      <Breadcrumbs />
      <Content />
      <Footer />
      <div className={OPEN}><Taskbar /></div>
    </div>
  );
}
